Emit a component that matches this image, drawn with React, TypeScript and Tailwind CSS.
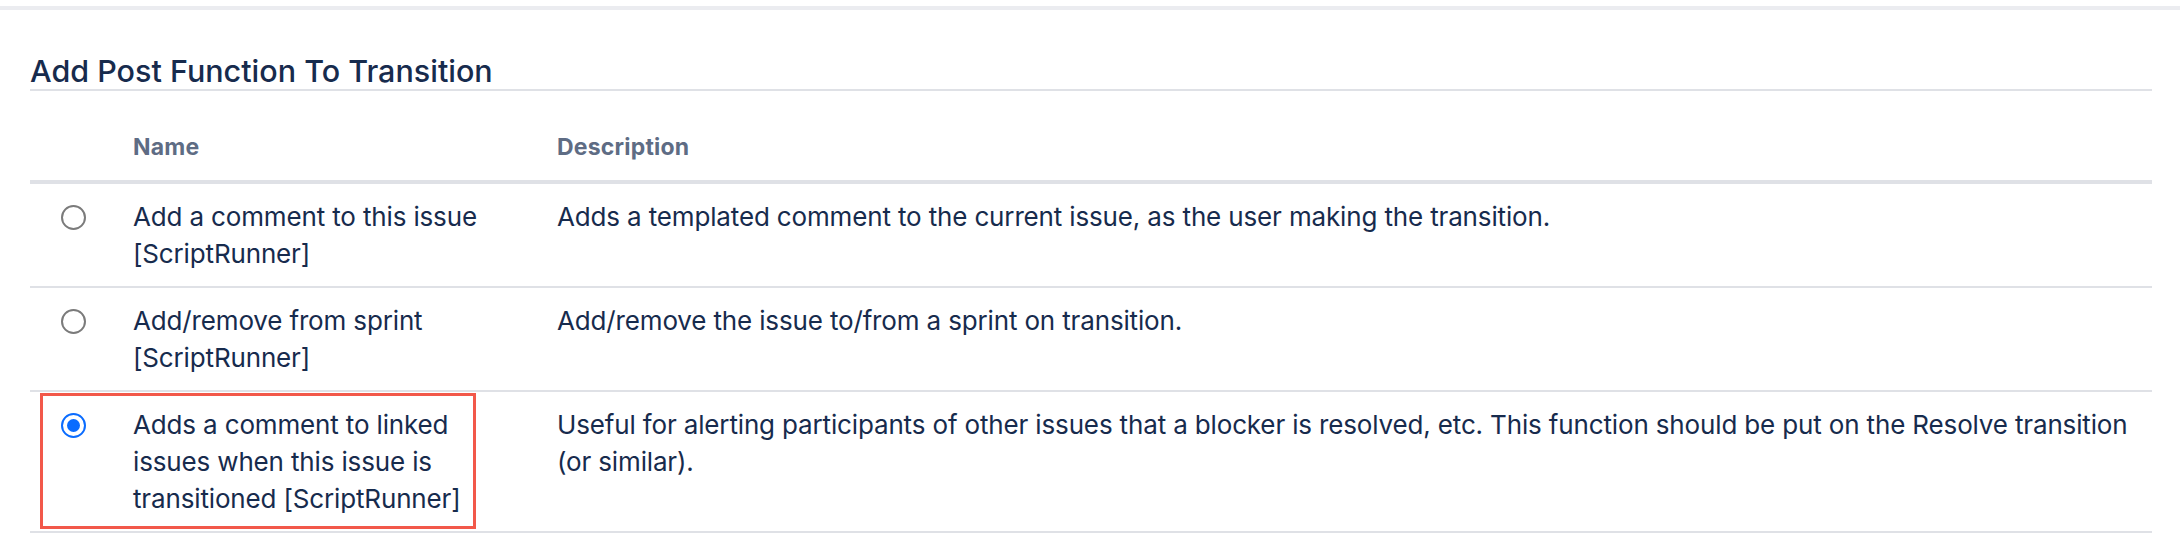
import React from "react";

type Row = { name: React.ReactNode; desc: string; selected?: boolean };

const rows: Row[] = [
  {
    name: (
      <>
        Add a comment to this issue
        <br />
        [ScriptRunner]
      </>
    ),
    desc: "Adds a templated comment to the current issue, as the user making the transition.",
  },
  {
    name: (
      <>
        Add/remove from sprint
        <br />
        [ScriptRunner]
      </>
    ),
    desc: "Add/remove the issue to/from a sprint on transition.",
  },
  {
    name: (
      <>
        Adds a comment to linked
        <br />
        issues when this issue is
        <br />
        transitioned [ScriptRunner]
      </>
    ),
    desc: "Useful for alerting participants of other issues that a blocker is resolved, etc. This function should be put on the Resolve transition (or similar).",
    selected: true,
  },
];

function Radio({ selected }: { selected?: boolean }) {
  if (selected) {
    return (
      <div className="w-[25px] h-[25px] rounded-full border-[2.5px] border-[#0a6cff] bg-white flex items-center justify-center">
        <div className="w-[13px] h-[13px] rounded-full bg-[#0a6cff]" />
      </div>
    );
  }
  return <div className="w-[25px] h-[25px] rounded-full border-[2px] border-[#7b7b7b] bg-white" />;
}

export default function App() {
  return (
    <div
      className="relative w-[2180px] h-[546px] bg-white overflow-hidden text-[#172b4d]"
      style={{ fontFamily: "Inter, 'Noto Sans', sans-serif" }}
    >
      <div className="mt-[6px] h-[4px] bg-[#ebecf0]" />
      <div className="pl-[30px] pr-[28px]">
        <h2 className="mt-[43px] text-[30.5px] leading-[36px] font-medium border-b-2 border-[#dfe1e6]">
          Add Post Function To Transition
        </h2>
        <table className="w-full border-collapse table-fixed">
          <colgroup>
            <col className="w-[85px]" />
            <col className="w-[424px]" />
            <col />
          </colgroup>
          <thead>
            <tr className="border-b-4 border-[#dfe1e6]">
              <th />
              <th className="text-left pl-[18px] pt-[43px] pb-[20px] text-[23px] leading-[26px] font-bold tracking-[0.2px] text-[#5e6c84]">
                Name
              </th>
              <th className="text-left pl-[18px] pt-[43px] pb-[20px] text-[23px] leading-[26px] font-bold tracking-[0.2px] text-[#5e6c84]">
                Description
              </th>
            </tr>
          </thead>
          <tbody>
            {rows.map((r, i) => (
              <tr key={i} className="border-b-2 border-[#dfe1e6] align-top">
                <td className="pl-[31px] pt-[21px] pb-[14px]">
                  <Radio selected={r.selected} />
                </td>
                <td className="pl-[18px] pr-[18px] py-[14px] text-[26px] leading-[37px] tracking-[-0.15px]">
                  {r.name}
                </td>
                <td className="pl-[18px] pr-[8px] py-[14px] text-[26px] leading-[37px] tracking-[-0.15px]">
                  {r.desc}
                </td>
              </tr>
            ))}
          </tbody>
        </table>
      </div>
      <div className="absolute left-[40px] top-[393px] w-[436px] h-[136px] border-[3px] border-[#f2584a] pointer-events-none" />
    </div>
  );
}
